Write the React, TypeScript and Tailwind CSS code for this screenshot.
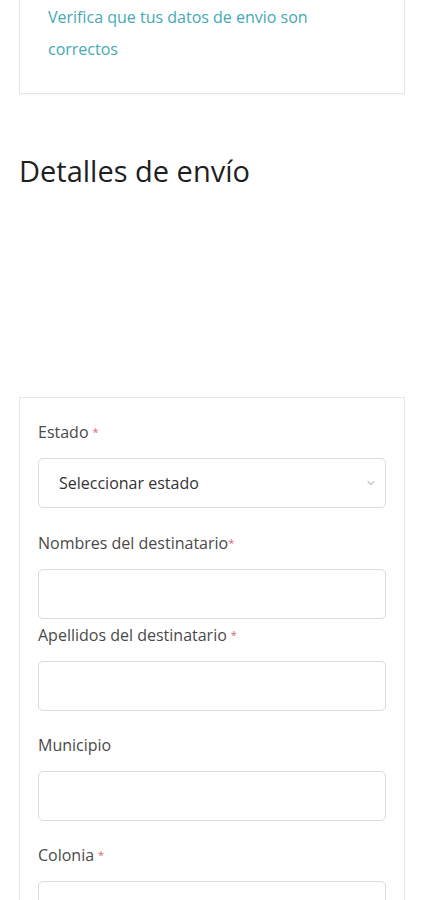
import { ChevronDown } from 'lucide-react'

const fields = [
  { label: 'Nombres del destinatario', required: true, tight: true, gap: false },
  { label: 'Apellidos del destinatario', required: true, tight: false, gap: true },
  { label: 'Municipio', required: false, tight: false, gap: false },
  { label: 'Colonia', required: true, tight: false, gap: true },
]

function Label({ text, required, gap }: { text: string; required: boolean; gap?: boolean }) {
  return (
    <label className="block h-6 text-[16px] leading-6 text-[#4a4a4a]">
      {text}
      {required && <span className={`text-[#d9667a] text-[11px] align-top ${gap ? 'ml-1' : ''}`}>*</span>}
    </label>
  )
}

export default function App() {
  return (
    <div className="min-h-[900px] bg-white font-['Open_Sans','Noto_Sans',sans-serif] overflow-hidden">
      <div className="mx-[19px] border-x border-b border-[#e6e6e6] pt-[1px] pb-[28px] pl-[28px] pr-4 shadow-[0_1px_2px_rgba(0,0,0,0.04)]">
        <p className="text-[16px] leading-[32px] text-[#45a9b3]">
          Verifica que tus datos de envio son
          <br />
          correctos
        </p>
      </div>

      <h2 className="mt-[61px] ml-[19px] text-[29px] leading-8 text-[#1f1f1f]">Detalles de envío</h2>

      <div className="mx-[19px] mt-[210px] border border-[#e8e8e8] px-[18px] pt-[22px] pb-6">
        <Label text="Estado" required gap />
        <div className="mt-[14px] flex h-[50px] items-center justify-between rounded-[5px] border border-[#dcdcdc] pl-5 pr-2">
          <span className="text-[16px] text-[#333]">Seleccionar estado</span>
          <ChevronDown className="h-3 w-3 text-[#777]" strokeWidth={1.5} />
        </div>

        {fields.map((f, i) => (
          <div key={f.label} className={i === 0 ? 'mt-[23px]' : fields[i - 1].tight ? 'mt-1' : 'mt-[22px]'}>
            <Label text={f.label} required={f.required} gap={f.gap} />
            <div className="mt-[14px] h-[50px] rounded-[5px] border border-[#dcdcdc]" />
          </div>
        ))}
      </div>
    </div>
  )
}
